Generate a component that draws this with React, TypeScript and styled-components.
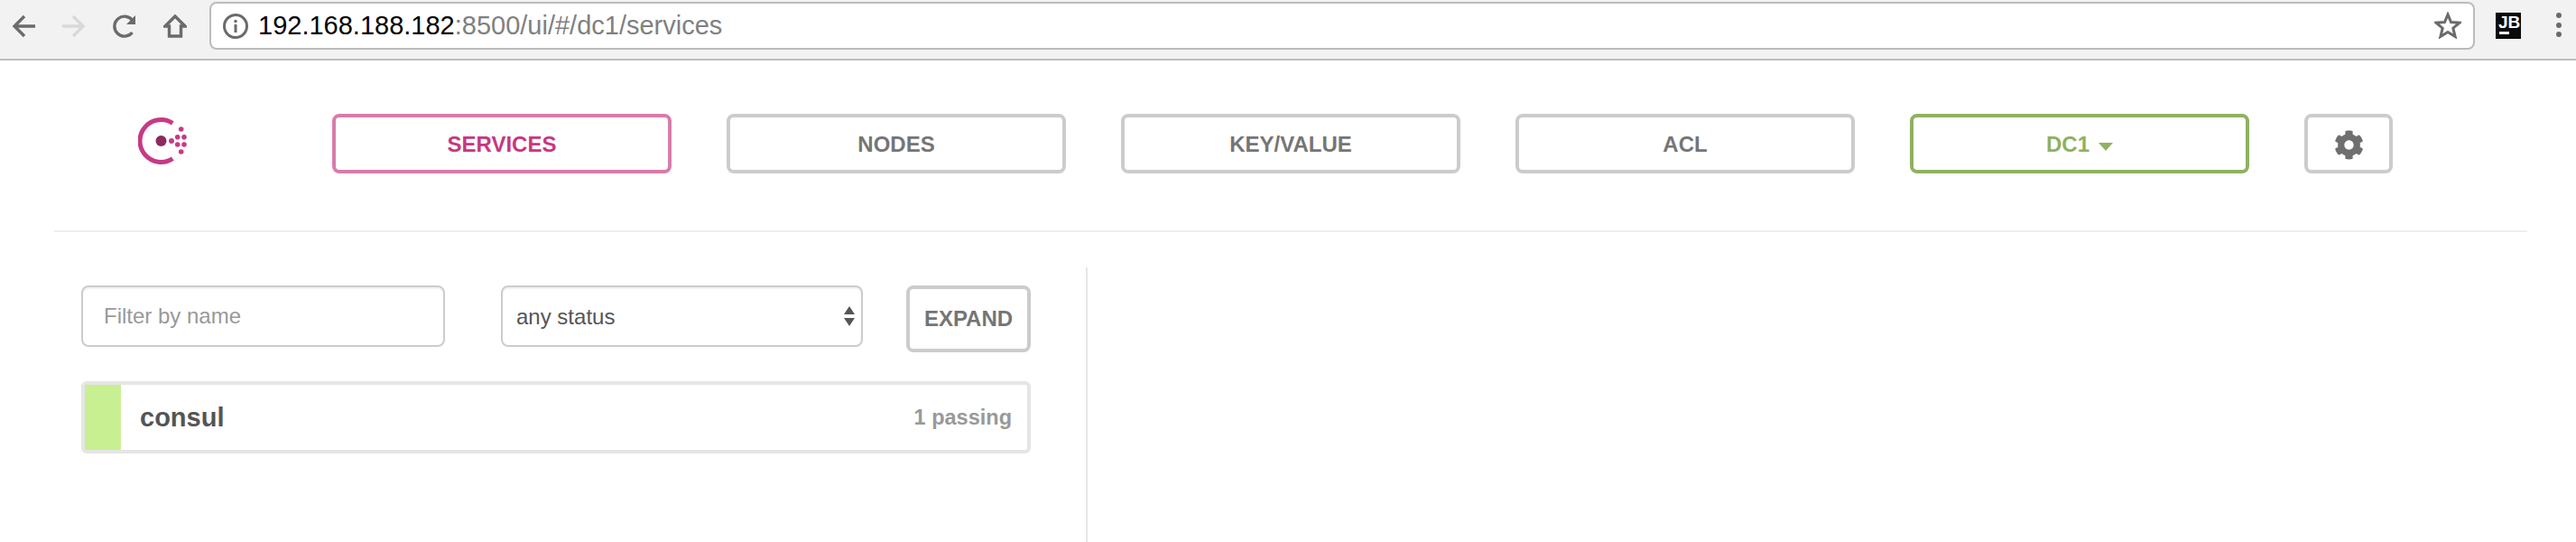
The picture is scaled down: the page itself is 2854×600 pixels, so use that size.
import { createGlobalStyle } from "styled-components";
import styled from "styled-components";
import { FaCog } from "react-icons/fa";

const GlobalStyle = createGlobalStyle`
  html, body {
    margin: 0;
    background: white;
    overflow: hidden;
  }
  * {
    box-sizing: border-box;
  }
`;

const Page = styled.div`
  width: 2854px;
  height: 600px;
  overflow: hidden;
  font-family: "Liberation Sans", Arial, sans-serif;
`;

const BrowserBar = styled.div`
  display: flex;
  align-items: flex-start;
  height: 67px;
  padding: 2px 0 0 13px;
  background: #f2f2f2;
  border-bottom: 2px solid #bdbdbd;
`;

const NavIcons = styled.div`
  display: flex;
  gap: 30px;
  padding-top: 14px;
`;

const NavIcon = styled.svg`
  display: block;
  width: 26px;
  height: 26px;
  fill: none;
  stroke: ${(p) => (p.$faded ? "#d9d9d9" : "#6b6b6b")};
  stroke-width: 3.4;
`;

const AddressBox = styled.div`
  display: flex;
  align-items: center;
  width: 2510px;
  height: 53px;
  margin-left: 25px;
  padding: 0 13px;
  background: white;
  border: 2px solid #bcbcbc;
  border-radius: 8px;
  font-size: 29px;
`;

const InfoIcon = styled.svg`
  width: 28px;
  height: 28px;
  margin-right: 11px;
  fill: none;
  stroke: #6b6b6b;
  stroke-width: 3;
`;

const Host = styled.span`
  color: #000;
`;

const UrlRest = styled.span`
  color: #808080;
`;

const Star = styled.svg`
  width: 30px;
  height: 30px;
  margin: -1px 0 0 auto;
  fill: none;
  stroke: #6b6b6b;
  stroke-width: 3;
`;

const JetBrains = styled.div`
  width: 30px;
  height: 31px;
  margin: 11px 0 0 22px;
  padding: 3px 0 0 3px;
  background: #0a0a0a;
  border: 1px solid #eee;
  color: white;
  font-size: 19px;
  font-weight: 700;
  line-height: 15px;
`;

const JetBrainsBar = styled.div`
  width: 11px;
  height: 3px;
  margin: 3px 0 0 1px;
  background: white;
`;

const MenuDots = styled.div`
  display: flex;
  flex-direction: column;
  gap: 4.5px;
  margin: 12px 0 0 38px;
`;

const MenuDot = styled.div`
  width: 6px;
  height: 6px;
  border-radius: 50%;
  background: #6b6b6b;
`;

const Header = styled.header`
  display: flex;
  align-items: flex-start;
  height: 188px;
  padding: 59px 0 0 153px;
`;

const Logo = styled.svg`
  flex: none;
  width: 54px;
  height: 54px;
  margin: 3px 161px 0 0;
`;

const TopNav = styled.nav`
  display: flex;
  gap: 61px;
`;

const NavButton = styled.a`
  display: flex;
  align-items: center;
  justify-content: center;
  gap: 8px;
  width: ${(p) => p.$width || 376}px;
  height: 66px;
  padding-top: 2px;
  border: 4px solid ${(p) => p.$border || "#cccccc"};
  border-radius: 8px;
  color: ${(p) => p.$color || "#757575"};
  font-size: 24px;
  font-weight: 700;
`;

const Caret = styled.span`
  width: 0;
  height: 0;
  margin: 4px 0 0 2px;
  border-left: 8px solid transparent;
  border-right: 8px solid transparent;
  border-top: 9px solid #8fb162;
`;

const Divider = styled.div`
  height: 2px;
  margin: 0 54px 0 60px;
  background: #eeeeee;
`;

const Content = styled.main`
  display: flex;
  margin: 39px 0 0 60px;
`;

const ServicesColumn = styled.section`
  width: 1145px;
  height: 310px;
  padding: 20px 61px 0 30px;
  border-right: 2px solid #e6e6e6;
`;

const FilterRow = styled.div`
  display: flex;
  align-items: flex-start;
`;

const FilterInput = styled.input`
  width: 403px;
  height: 68px;
  padding: 0 23px;
  border: 2px solid #cccccc;
  border-radius: 8px;
  box-shadow: inset 0 2px 2px rgba(0, 0, 0, 0.06);
  color: #555555;
  font-family: inherit;
  font-size: 24px;
  outline: none;

  &::placeholder {
    color: #999999;
    opacity: 1;
  }
`;

const SelectWrap = styled.div`
  position: relative;
  margin: 0 48px 0 62px;
`;

const StatusSelect = styled.select`
  display: block;
  width: 401px;
  height: 68px;
  padding: 0 15px;
  appearance: none;
  background: white;
  border: 2px solid #cccccc;
  border-radius: 8px;
  box-shadow: inset 0 2px 2px rgba(0, 0, 0, 0.06);
  color: #555555;
  font-family: inherit;
  font-size: 24px;
  outline: none;
`;

const SelectArrows = styled.svg`
  position: absolute;
  top: 23px;
  right: 9px;
  width: 12px;
  height: 22px;
  fill: #555555;
`;

const ExpandButton = styled.button`
  width: 138px;
  height: 74px;
  padding: 0;
  background: white;
  border: 4px solid #cccccc;
  border-radius: 8px;
  color: #757575;
  font-family: inherit;
  font-size: 24px;
  font-weight: 700;
`;

const ServiceRow = styled.div`
  display: flex;
  align-items: center;
  height: 80px;
  margin-top: 32px;
  padding-right: 17px;
  border: 4px solid #e5e5e5;
  border-radius: 6px;
`;

const StatusBar = styled.div`
  align-self: stretch;
  width: 40px;
  background: #c8ef92;
`;

const ServiceName = styled.div`
  margin-left: 21px;
  color: #555555;
  font-size: 29px;
  font-weight: 700;
`;

const ServiceCount = styled.div`
  margin-left: auto;
  color: #999999;
  font-size: 23.5px;
  font-weight: 700;
`;

export default function App() {
  return (
    <Page>
      <GlobalStyle />
      <BrowserBar>
        <NavIcons>
          <NavIcon viewBox="0 0 26 26">
            <path d="M26 13H3M14 2 3 13l11 11" />
          </NavIcon>
          <NavIcon viewBox="0 0 26 26" $faded>
            <path d="M0 13h23M12 2l11 11-11 11" />
          </NavIcon>
          <NavIcon viewBox="0 0 26 26">
            <path d="M21.5 20a11 11 0 1 1 .5-13" />
            <path d="M25 1v10H15z" fill="#6b6b6b" stroke="none" />
          </NavIcon>
          <NavIcon viewBox="0 0 26 26">
            <path d="M13 2 2 13h4.500v11h13V13H24z" />
          </NavIcon>
        </NavIcons>
        <AddressBox>
          <InfoIcon viewBox="0 0 28 28">
            <circle cx="14" cy="14" r="12.500" />
            <path d="M14 12v9M14 7v3" />
          </InfoIcon>
          <Host>192.168.188.182</Host>
          <UrlRest>:8500/ui/#/dc1/services</UrlRest>
          <Star viewBox="0 0 30 30">
            <path d="M15 3l3.500 8.500 9.500.7-7.200 6 2.300 9.300-8.100-5-8.100 5 2.300-9.300-7.200-6 9.500-.7z" />
          </Star>
        </AddressBox>
        <JetBrains>
          JB
          <JetBrainsBar />
        </JetBrains>
        <MenuDots>
          <MenuDot />
          <MenuDot />
          <MenuDot />
        </MenuDots>
      </BrowserBar>
      <Header>
        <Logo viewBox="0 0 54 54">
          <path d="M38.300 7.300A23.500 23.500 0 1 0 38.300 46.700" fill="none" stroke="#c73a86" strokeWidth="5" />
          <circle cx="25.500" cy="27" r="6" fill="#8c2a5f" />
          <circle cx="37" cy="27" r="3" fill="#c73a86" />
          <circle cx="47.700" cy="14" r="2.800" fill="#c73a86" />
          <circle cx="43.700" cy="22.700" r="2.800" fill="#c73a86" />
          <circle cx="51" cy="22.700" r="2.800" fill="#c73a86" />
          <circle cx="43.700" cy="31" r="2.800" fill="#c73a86" />
          <circle cx="51" cy="31" r="2.800" fill="#c73a86" />
          <circle cx="47.700" cy="39" r="2.800" fill="#c73a86" />
        </Logo>
        <TopNav>
          <NavButton $border="#d87cab" $color="#c73781">SERVICES</NavButton>
          <NavButton>NODES</NavButton>
          <NavButton>KEY/VALUE</NavButton>
          <NavButton>ACL</NavButton>
          <NavButton $border="#8fb162" $color="#8fb162">
            DC1
            <Caret />
          </NavButton>
          <NavButton $width={98}>
            <FaCog size={33} color="#6f6f6f" />
          </NavButton>
        </TopNav>
      </Header>
      <Divider />
      <Content>
        <ServicesColumn>
          <FilterRow>
            <FilterInput placeholder="Filter by name" />
            <SelectWrap>
              <StatusSelect defaultValue="any">
                <option value="any">any status</option>
              </StatusSelect>
              <SelectArrows viewBox="0 0 12 22">
                <path d="M6 0l6 9H0zM0 13h12l-6 9z" />
              </SelectArrows>
            </SelectWrap>
            <ExpandButton>EXPAND</ExpandButton>
          </FilterRow>
          <ServiceRow>
            <StatusBar />
            <ServiceName>consul</ServiceName>
            <ServiceCount>1 passing</ServiceCount>
          </ServiceRow>
        </ServicesColumn>
      </Content>
    </Page>
  );
}
